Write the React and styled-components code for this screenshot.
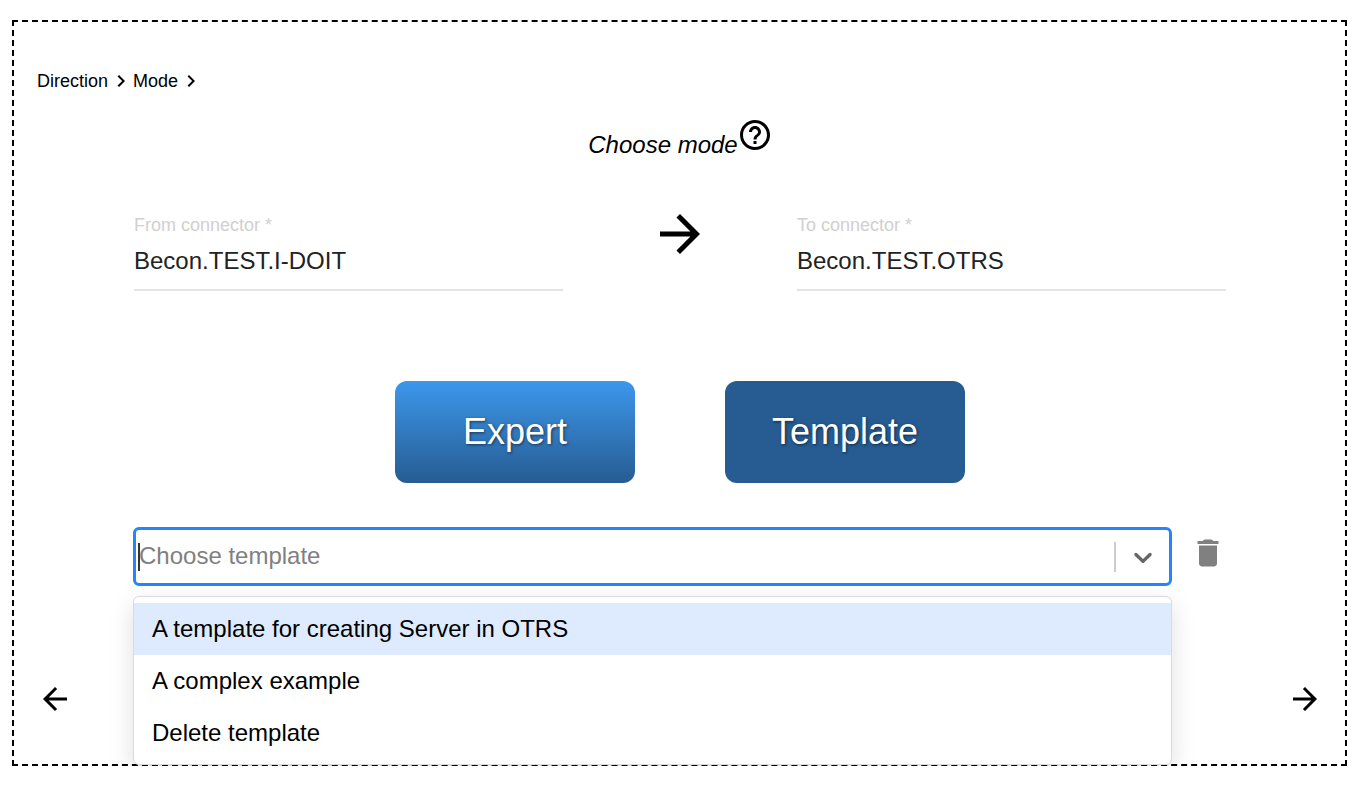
import React from "react";
import styled, { createGlobalStyle } from "styled-components";
import {
  MdArrowBack,
  MdArrowForward,
  MdChevronRight,
  MdDelete,
  MdHelpOutline,
} from "react-icons/md";

const Global = createGlobalStyle`
  html, body { margin: 0; padding: 0; background: #fff; }
  body { font-family: "Liberation Sans", Arial, sans-serif; color: #000; }
  * { box-sizing: border-box; }
`;

const Frame = styled.div`
  margin: 20px 12px 0;
  height: 746px;
  border: 2px dashed #000;
  padding: 47px 22px 0 23px;
  display: flex;
  flex-direction: column;
`;

const Breadcrumb = styled.nav`
  display: flex;
  align-items: center;
  height: 24px;
  font-size: 18px;
  svg { flex: none; margin-left: 1px; }
`;

const Crumb = styled.span`
  line-height: 24px;
`;

const Title = styled.div`
  display: flex;
  justify-content: center;
  align-items: flex-start;
  margin-top: 24px;
  height: 48px;
  padding-left: 1px;
  svg { margin-left: -1px; }
`;

const TitleText = styled.em`
  font-size: 24px;
  line-height: 28px;
  margin-top: 14px;
`;

const ConnectorRow = styled.div`
  display: flex;
  justify-content: space-between;
  align-items: flex-start;
  width: 1092px;
  margin: 46px 0 0 97px;
`;

const Field = styled.div`
  width: 429px;
  height: 80px;
  border-bottom: 2px solid #e4e4e4;
  display: flex;
  flex-direction: column;
`;

const FieldLabel = styled.label`
  font-size: 18px;
  line-height: 21px;
  margin-top: 4px;
  color: #d0d0d0;
`;

const FieldValue = styled.div`
  font-size: 24px;
  line-height: 28px;
  margin-top: 11px;
  color: #222;
`;

const BigArrow = styled.div`
  width: 60px;
  height: 60px;
  margin-top: -7px;
`;

const Modes = styled.div`
  display: flex;
  justify-content: center;
  gap: 90px;
  margin-top: 90px;
`;

const ModeButton = styled.button`
  width: 240px;
  height: 102px;
  border: 0;
  border-radius: 12px;
  padding: 0;
  font-family: inherit;
  font-size: 36px;
  color: #fff;
  text-shadow: 1px 1px 3px rgba(0, 0, 0, 0.55);
  background: ${(p) =>
    p.$active ? "#265c92" : "linear-gradient(#3d97ec, #265c92)"};
`;

const TemplateRow = styled.div`
  display: flex;
  align-items: flex-start;
  margin: 44px 0 0 96px;
`;

const SelectWrap = styled.div`
  position: relative;
  width: 1039px;
`;

const SelectControl = styled.div`
  height: 59px;
  border: 3px solid #2684ff;
  border-radius: 6px;
  display: flex;
  align-items: center;
  padding-left: 2px;
  background: #fff;
`;

const Caret = styled.span`
  width: 2px;
  height: 28px;
  margin-right: -1px;
  background: #333;
  flex: none;
`;

const Placeholder = styled.span`
  flex: 1;
  font-size: 24px;
  margin-bottom: 2px;
  color: #808080;
`;

const Separator = styled.span`
  width: 2px;
  height: 30px;
  background: #ccc;
  flex: none;
`;

const ChevronBox = styled.span`
  width: 53px;
  display: flex;
  justify-content: center;
  align-items: center;
  color: #666;
  svg { display: block; }
`;

const TrashButton = styled.div`
  margin: 8px 0 0 18px;
  width: 36px;
  height: 36px;
  color: #808080;
  svg { display: block; }
`;

const Menu = styled.ul`
  position: absolute;
  top: 69px;
  left: 0;
  width: 100%;
  margin: 0;
  padding: 6px 0 5px;
  height: 169px;
  list-style: none;
  background: #fff;
  border: 1px solid #dadada;
  border-radius: 6px;
  box-shadow: 0 8px 24px rgba(0, 0, 0, 0.13);
  z-index: 2;
`;

const Option = styled.li`
  height: 52px;
  line-height: 52px;
  padding-left: 18px;
  font-size: 24px;
  background: ${(p) => (p.$focused ? "#deebff" : "transparent")};
`;

const Pager = styled.div`
  display: flex;
  justify-content: space-between;
  margin-top: 95px;
  svg { display: block; }
`;

const ChevronDown = () => (
  <svg width="30" height="30" viewBox="0 0 20 20" fill="currentColor">
    <path d="M4.516 7.548c0.436-0.446 1.043-0.481 1.576 0l3.908 3.747 3.908-3.747c0.533-0.481 1.141-0.446 1.576 0 0.436 0.445 0.408 1.197 0 1.615-0.406 0.418-4.695 4.502-4.695 4.502-0.217 0.223-0.502 0.335-0.789 0.335s-0.572-0.112-0.79-0.335c0 0-4.287-4.084-4.695-4.502s-0.436-1.17 0-1.615z" />
  </svg>
);

export default function App() {
  return (
    <>
      <Global />
      <Frame>
        <Breadcrumb>
          <Crumb>Direction</Crumb>
          <MdChevronRight size={24} />
          <Crumb>Mode</Crumb>
          <MdChevronRight size={24} />
        </Breadcrumb>
        <Title>
          <TitleText>Choose mode</TitleText>
          <MdHelpOutline size={36} />
        </Title>
        <ConnectorRow>
          <Field>
            <FieldLabel>From connector *</FieldLabel>
            <FieldValue>Becon.TEST.I-DOIT</FieldValue>
          </Field>
          <BigArrow>
            <MdArrowForward size={60} />
          </BigArrow>
          <Field>
            <FieldLabel>To connector *</FieldLabel>
            <FieldValue>Becon.TEST.OTRS</FieldValue>
          </Field>
        </ConnectorRow>
        <Modes>
          <ModeButton>Expert</ModeButton>
          <ModeButton $active>Template</ModeButton>
        </Modes>
        <TemplateRow>
          <SelectWrap>
            <SelectControl>
              <Caret />
              <Placeholder>Choose template</Placeholder>
              <Separator />
              <ChevronBox>
                <ChevronDown />
              </ChevronBox>
            </SelectControl>
            <Menu>
              <Option $focused>A template for creating Server in OTRS</Option>
              <Option>A complex example</Option>
              <Option>Delete template</Option>
            </Menu>
          </SelectWrap>
          <TrashButton>
            <MdDelete size={36} />
          </TrashButton>
        </TemplateRow>
        <Pager>
          <MdArrowBack size={36} />
          <MdArrowForward size={36} />
        </Pager>
      </Frame>
    </>
  );
}
